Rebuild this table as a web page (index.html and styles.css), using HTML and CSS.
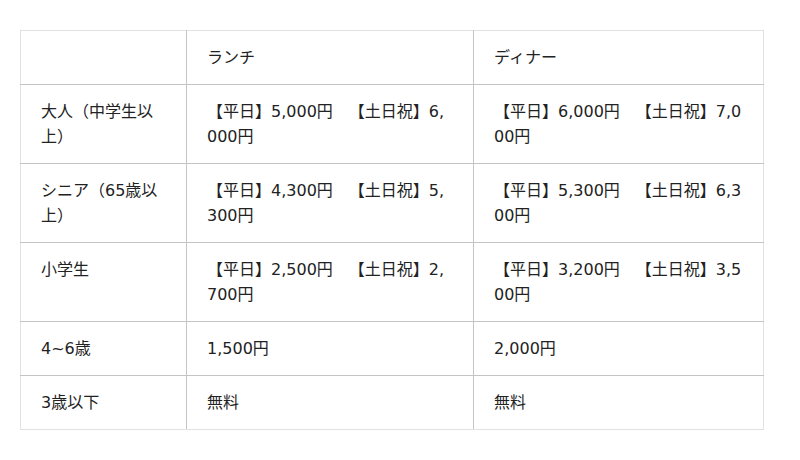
FILE: index.html
```html
<!DOCTYPE html>
<html lang="ja">
<head>
<meta charset="utf-8">
<link rel="stylesheet" href="styles.css">
</head>
<body>
<table class="price">
<colgroup><col class="c1"><col class="c2"><col class="c3"></colgroup>
<tr><td></td><td>ランチ</td><td>ディナー</td></tr>
<tr><td>大人（中学生以上）</td><td>【平日】5,000円　【土日祝】6,000円</td><td>【平日】6,000円　【土日祝】7,000円</td></tr>
<tr><td>シニア（65歳以上）</td><td>【平日】4,300円　【土日祝】5,300円</td><td>【平日】5,300円　【土日祝】6,300円</td></tr>
<tr><td>小学生</td><td>【平日】2,500円　【土日祝】2,700円</td><td>【平日】3,200円　【土日祝】3,500円</td></tr>
<tr><td>4~6歳</td><td>1,500円</td><td>2,000円</td></tr>
<tr><td>3歳以下</td><td>無料</td><td>無料</td></tr>
</table>
</body>
</html>
```
FILE: styles.css
```css
html, body {
  margin: 0;
  background: #fff;
}
body {
  padding: 30px 20px;
  font-family: "DejaVu Sans", "Noto Sans CJK JP", sans-serif;
  font-size: 16px;
  color: #222;
}
.price {
  border-collapse: collapse;
  table-layout: fixed;
  width: 743px;
}
.c1 { width: 166px; }
.c2 { width: 287px; }
.c3 { width: 290px; }
.price td {
  border: 1px solid #c4c4c4;
  padding: 14px 20px;
  line-height: 25px;
  vertical-align: top;
  word-break: break-all;
  text-spacing-trim: space-all;
}
.price td + td {
  border-left-color: #b0b0b0;
}
.price tr:first-child td { border-top-color: #e2e2e2; }
.price tr:last-child td { border-bottom-color: #e2e2e2; }
.price td:first-child { border-left-color: #e2e2e2; }
.price td:last-child { border-right-color: #e2e2e2; }
```
